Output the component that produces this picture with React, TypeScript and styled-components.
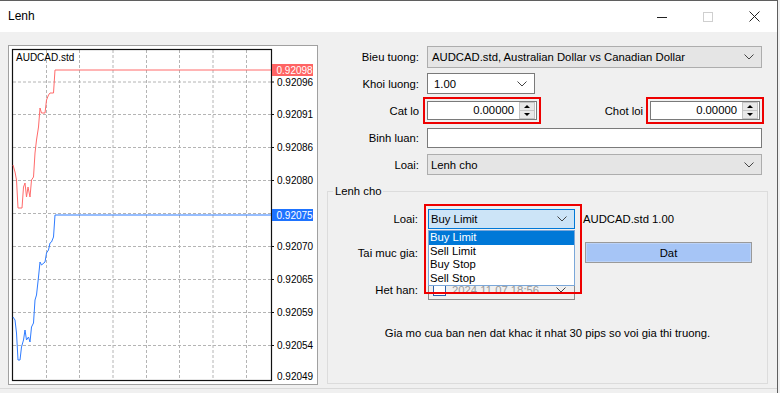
import React from 'react';
import styled, { createGlobalStyle } from 'styled-components';

const FONT = `"Liberation Sans", Arial, sans-serif`;

const redPath =
  'M13,165 L15,172 L16.5,180 L18,208 L22,208 L23.5,187 L25,183 L26.5,197 L28,187 L30,197 L31.5,180 L33.5,177 L35,153 L36.5,140 L38.5,127 L40,108 L41.5,113 L45,113 L46.5,100 L48.5,95 L50,93 L53.5,93 L55,70 L271,70';
const bluePath =
  'M13,317 L15,320 L16.5,333 L18,360 L20,360 L21.5,347 L23.5,340 L25,330 L26.5,340 L28.5,337 L30,342 L31.5,327 L33.5,323 L35,300 L36.5,295 L38.5,277 L40,262 L41.5,265 L45,262 L46.5,253 L48.5,250 L50,243 L51.5,242 L53.5,237 L55,215 L271,215';

const gridY = [82, 114.5, 147.5, 180.5, 213.5, 246.5, 279.5, 312.5, 345.5];
const gridX = [46.5, 79.5, 113, 146.5, 179.5, 213, 246.5];
const priceLabels = [
  { y: 82, t: '0.92096' },
  { y: 114.5, t: '0.92091' },
  { y: 147.5, t: '0.92086' },
  { y: 180.5, t: '0.92080' },
  { y: 246.5, t: '0.92070' },
  { y: 279.5, t: '0.92065' },
  { y: 312.5, t: '0.92059' },
  { y: 345.5, t: '0.92054' },
  { y: 376, t: '0.92049' },
];

const orderTypes = ['Buy Limit', 'Sell Limit', 'Buy Stop', 'Sell Stop'];

function Chevron() {
  return (
    <svg width="10" height="6" viewBox="0 0 10 6">
      <polyline points="0.5,0.5 5,5 9.5,0.5" fill="none" stroke="#444" strokeWidth="1" />
    </svg>
  );
}

function Spin({ width, highlight }: { width: number; highlight?: boolean }) {
  return (
    <SpinBox $w={width} $highlight={highlight}>
      <SpinValue>0.00000</SpinValue>
      <SpinButtons>
        <SpinHalf $dir="up" />
        <SpinHalf $dir="down" />
      </SpinButtons>
    </SpinBox>
  );
}

function PriceChart() {
  return (
    <ChartFrame>
      <svg width="308" height="338" viewBox="9 46 308 338">
        {gridY.map((y) => (
          <line key={'h' + y} x1="13" x2="271" y1={y} y2={y} stroke="#b4b4b4" strokeDasharray="3 2" />
        ))}
        {gridX.map((x) => (
          <line key={'v' + x} x1={x} x2={x} y1="50" y2="380" stroke="#b4b4b4" strokeDasharray="3 2" />
        ))}
        <rect x="12.5" y="49.5" width="259" height="331" fill="none" stroke="#111" strokeWidth="1.2" />
        {gridY.map((y) => (
          <line key={'t' + y} x1="271" x2="274" y1={y} y2={y} stroke="#111" />
        ))}
        <path d={redPath} fill="none" stroke="#ff6b6b" strokeWidth="1" />
        <path d={bluePath} fill="none" stroke="#2f7cff" strokeWidth="1" />
        <text x="16" y="61" fontSize="10" fontFamily={FONT} fill="#000">AUDCAD.std</text>
        {priceLabels.map((l) => (
          <text key={l.t} x="277" y={l.y + 3.6} fontSize="10" fontFamily={FONT} fill="#000">
            {l.t}
          </text>
        ))}
        <rect x="272" y="64" width="41" height="12" fill="#ff6464" />
        <text x="276.5" y="73.6" fontSize="10" fontFamily={FONT} fill="#fff">0.92098</text>
        <rect x="272" y="209" width="41" height="12" fill="#1e73ff" />
        <text x="276.5" y="218.6" fontSize="10" fontFamily={FONT} fill="#fff">0.92075</text>
      </svg>
    </ChartFrame>
  );
}

export default function App() {
  return (
    <Window>
      <GlobalStyle />
      <TitleBar>
        <Title>Lenh</Title>
        <WinControls>
          <WinButton>
            <svg width="10" height="10" viewBox="0 0 10 10">
              <line x1="0" x2="10" y1="5.5" y2="5.5" stroke="#222" />
            </svg>
          </WinButton>
          <WinButton>
            <svg width="10" height="10" viewBox="0 0 10 10">
              <rect x="0.5" y="0.5" width="9" height="9" fill="none" stroke="#cfcfcf" />
            </svg>
          </WinButton>
          <WinButton>
            <svg width="11" height="11" viewBox="0 0 11 11">
              <path d="M0.5,0.5 L10.5,10.5 M10.5,0.5 L0.5,10.5" stroke="#222" strokeWidth="1" />
            </svg>
          </WinButton>
        </WinControls>
      </TitleBar>

      <Body>
        <PriceChart />

        <FormPanel>
          <Row $h={22} $mt={1}>
            <Label>Bieu tuong:</Label>
            <Combo $variant="gray">
              <span>AUDCAD.std, Australian Dollar vs Canadian Dollar</span>
              <Chevron />
            </Combo>
          </Row>
          <Row $h={21} $mt={5}>
            <Label>Khoi luong:</Label>
            <Combo $variant="white" $w={108} $pl={6}>
              <span>1.00</span>
              <Chevron />
            </Combo>
          </Row>
          <Row $h={25} $mt={4}>
            <Label>Cat lo</Label>
            <FieldLine>
              <Spin width={110} highlight />
              <SideLabel>Chot loi</SideLabel>
              <Spin width={110} highlight />
            </FieldLine>
          </Row>
          <Row $h={20} $mt={5}>
            <Label>Binh luan:</Label>
            <TextInput />
          </Row>
          <Row $h={21} $mt={6}>
            <Label>Loai:</Label>
            <Combo $variant="gray" $pl={3}>
              <span>Lenh cho</span>
              <Chevron />
            </Combo>
          </Row>

          <GroupBox>
            <GroupLegend>Lenh cho</GroupLegend>
            <GroupRow $h={20} $mt={11}>
              <Label>Loai:</Label>
              <FieldLine>
                <ComboWrap>
                  <Combo $variant="open" $w={147} $pl={2}>
                    <span>Buy Limit</span>
                    <Chevron />
                  </Combo>
                  <DropList>
                    {orderTypes.map((t, i) => (
                      <DropItem key={t} $active={i === 0}>{t}</DropItem>
                    ))}
                  </DropList>
                  <RedFrame />
                </ComboWrap>
                <InfoText>AUDCAD.std 1.00</InfoText>
              </FieldLine>
            </GroupRow>
            <GroupRow $h={21} $mt={13}>
              <Label>Tai muc gia:</Label>
              <FieldLine>
                <Spin width={147} />
                <DatButton>Dat</DatButton>
              </FieldLine>
            </GroupRow>
            <GroupRow $h={21} $mt={16}>
              <Label>Het han:</Label>
              <DatePicker>
                <CheckBox />
                <DateText>2024.11.07 18:56</DateText>
                <Chevron />
              </DatePicker>
            </GroupRow>
            <Message>Gia mo cua ban nen dat khac it nhat 30 pips so voi gia thi truong.</Message>
          </GroupBox>
        </FormPanel>
      </Body>
    </Window>
  );
}

const GlobalStyle = createGlobalStyle`
  *, *::before, *::after { box-sizing: border-box; }
  html, body { margin: 0; padding: 0; background: #f0f0f0; }
  body { font-family: ${FONT}; font-size: 11.3px; color: #000; overflow: hidden; }
`;

const Window = styled.div`
  width: 778px;
  height: 393px;
  border-top: 1px solid #5f5f5f;
  border-right: 1px solid #5f5f5f;
  background: #f0f0f0;
  overflow: hidden;
`;

const TitleBar = styled.div`
  height: 31px;
  background: #fff;
  display: flex;
  align-items: center;
  padding-left: 8px;
`;

const Title = styled.div`
  font-size: 12px;
  flex: 1;
  padding-bottom: 1px;
`;

const WinControls = styled.div`
  display: flex;
  height: 100%;
`;

const WinButton = styled.div`
  width: 46px;
  height: 100%;
  display: flex;
  align-items: center;
  justify-content: center;
`;

const Body = styled.div`
  display: flex;
  gap: 9px;
  padding: 13px 0 0 8px;
  height: 357px;
  border-bottom: 1px solid #d9d9d9;
`;

const ChartFrame = styled.div`
  width: 310px;
  height: 340px;
  border: 1px solid #a0a0a0;
  background: #fff;
  flex-shrink: 0;
  svg { display: block; }
`;

const FormPanel = styled.div`
  width: 441px;
  display: flex;
  flex-direction: column;
`;

const Row = styled.div<{ $h: number; $mt: number }>`
  display: grid;
  grid-template-columns: 92px 1fr;
  column-gap: 8px;
  align-items: center;
  height: ${(p) => p.$h}px;
  margin-top: ${(p) => p.$mt}px;
  padding-right: 6px;
`;

const Label = styled.div`
  text-align: right;
  white-space: nowrap;
`;

const Combo = styled.div<{ $variant: 'gray' | 'white' | 'open'; $w?: number; $pl?: number }>`
  height: 100%;
  width: ${(p) => (p.$w ? `${p.$w}px` : '100%')};
  display: flex;
  align-items: center;
  justify-content: space-between;
  padding: 0 7px 0 ${(p) => p.$pl ?? 4}px;
  border: 1px solid
    ${(p) => (p.$variant === 'open' ? '#0078d7' : p.$variant === 'white' ? '#7a7a7a' : '#adadad')};
  background: ${(p) => (p.$variant === 'open' ? '#cce4f7' : p.$variant === 'white' ? '#fff' : '#e5e5e5')};
  white-space: nowrap;
`;

const FieldLine = styled.div`
  display: flex;
  align-items: center;
  height: 100%;
`;

const SideLabel = styled.div`
  margin-left: auto;
  margin-right: 7px;
`;

const SpinBox = styled.div<{ $w: number; $highlight?: boolean }>`
  width: ${(p) => p.$w}px;
  height: 19px;
  display: flex;
  align-items: stretch;
  background: #fff;
  border: 1px solid #7a7a7a;
  outline: ${(p) => (p.$highlight ? '2px solid #ee0000' : 'none')};
  outline-offset: 2px;
  &:last-child { margin-right: 2px; }
`;

const SpinValue = styled.div`
  flex: 1;
  text-align: right;
  padding-right: 5px;
  line-height: 17px;
`;

const SpinButtons = styled.div`
  width: 16px;
  margin: 0 1px 0 0;
  display: flex;
  flex-direction: column;
`;

const SpinHalf = styled.div<{ $dir: 'up' | 'down' }>`
  flex: 1;
  background: #e8e8e8;
  border: 1px solid #c4c4c4;
  ${(p) => (p.$dir === 'up' ? 'border-bottom-width: 0;' : '')}
  display: flex;
  align-items: center;
  justify-content: center;
  &::after {
    content: '';
    border-left: 3px solid transparent;
    border-right: 3px solid transparent;
    ${(p) => (p.$dir === 'up' ? 'border-bottom: 3px solid #000;' : 'border-top: 3px solid #000;')}
  }
`;

const TextInput = styled.div`
  height: 100%;
  background: #fff;
  border: 1px solid #7a7a7a;
`;

const GroupBox = styled.fieldset`
  margin: 9px 0 0 0;
  padding: 0;
  height: 200px;
  border: 1px solid #dcdcdc;
  min-inline-size: 0;
`;

const GroupLegend = styled.legend`
  margin-left: 5px;
  padding: 0 2px;
  line-height: 14px;
`;

const GroupRow = styled.div<{ $h: number; $mt: number }>`
  display: grid;
  grid-template-columns: 90px 1fr;
  column-gap: 10px;
  align-items: center;
  height: ${(p) => p.$h}px;
  margin-top: ${(p) => p.$mt}px;
`;

const ComboWrap = styled.div`
  position: relative;
  width: 147px;
  height: 100%;
`;

const DropList = styled.div`
  position: absolute;
  z-index: 2;
  left: 0;
  top: 21px;
  width: 147px;
  background: #fff;
  border: 1px solid #7aa7d9;
  padding: 0;
`;

const DropItem = styled.div<{ $active?: boolean }>`
  height: 13.5px;
  line-height: 13.5px;
  padding-left: 1px;
  background: ${(p) => (p.$active ? '#0078d7' : '#fff')};
  color: ${(p) => (p.$active ? '#fff' : '#000')};
`;

const RedFrame = styled.div`
  position: absolute;
  z-index: 3;
  left: -4px;
  top: -5px;
  width: 158px;
  height: 90px;
  border: 2px solid #ee0000;
  pointer-events: none;
`;

const InfoText = styled.div`
  margin-left: 8px;
  white-space: nowrap;
`;

const DatButton = styled.div`
  margin-left: 10px;
  width: 167px;
  height: 21px;
  display: flex;
  align-items: center;
  justify-content: center;
  background: #a6c5f6;
  border: 1px solid #9a9a9a;
  box-shadow: inset 0 0 0 1px #bcd3f8;
`;

const DatePicker = styled.div`
  width: 147px;
  height: 100%;
  display: flex;
  align-items: center;
  padding: 0 8px 0 4px;
  background: #f0f0f0;
  border: 1px solid #8a8a8a;
`;

const CheckBox = styled.div`
  width: 13px;
  height: 13px;
  border: 1px solid #2b5fa8;
  background: #fff;
  flex-shrink: 0;
`;

const DateText = styled.div`
  flex: none;
  width: 90px;
  margin: 0 auto 0 6px;
  color: #9a9a9a;
  overflow: hidden;
  white-space: nowrap;
`;

const Message = styled.div`
  margin-top: 27px;
  text-align: center;
`;
